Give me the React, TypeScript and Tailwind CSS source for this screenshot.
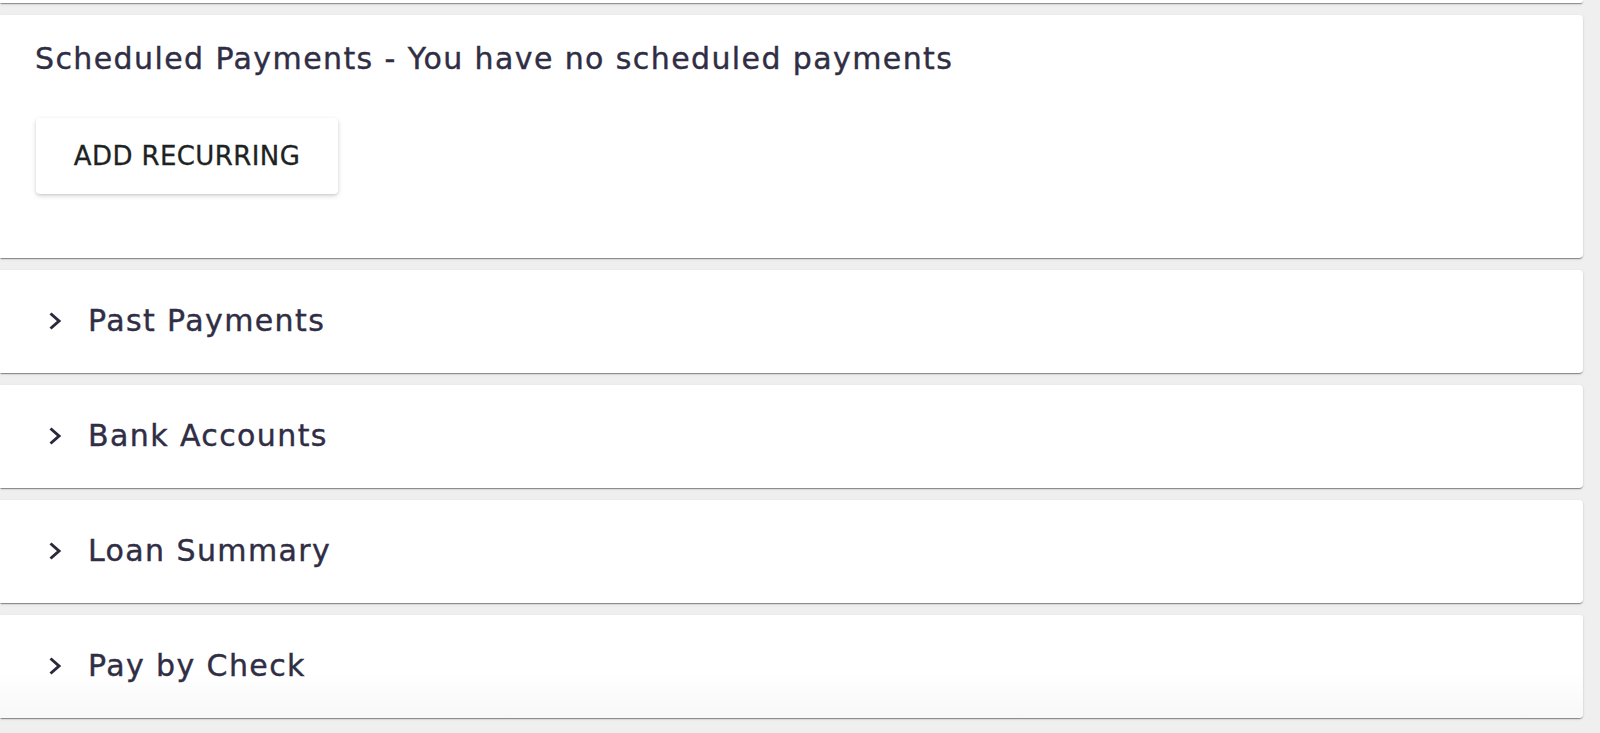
import React from "react";

const font = { fontFamily: '"DejaVu Sans", "Liberation Sans", sans-serif' };

const ChevronIcon = () => (
  <svg viewBox="0 0 18 22" className="w-[18px] h-[22px] shrink-0" fill="none">
    <polyline points="3.5,3.5 12,11 3.5,18.5" stroke="#2b2a3c" strokeWidth="3" strokeLinejoin="miter" />
  </svg>
);

const cardShadow =
  "shadow-[0_2px_1px_-1px_rgba(0,0,0,0.28),0_1px_1px_0_rgba(0,0,0,0.16),0_1px_3px_0_rgba(0,0,0,0.12)]";

const titleText =
  "text-[30px] leading-[36px] tracking-[1.4px] text-[#302e44] [-webkit-text-stroke:0.4px_#302e44]";

const sections = ["Past Payments", "Bank Accounts", "Loan Summary", "Pay by Check"];

export default function App() {
  return (
    <div className="min-h-screen bg-[#efefef] pr-[17px] overflow-hidden" style={font}>
      <div className="flex flex-col gap-[12px]">
        {/* tail of the card above */}
        <div className={`h-[3px] bg-white rounded-br-[4px] ${cardShadow}`} />

        {/* Scheduled payments */}
        <div className={`bg-white rounded-r-[4px] pl-[35px] pt-[26px] pb-[64px] ${cardShadow}`}>
          <h2 className={titleText}>Scheduled Payments - You have no scheduled payments</h2>
          <button className="mt-[41px] ml-[1px] w-[302px] h-[76px] flex items-center justify-center bg-white rounded-[4px] shadow-[0_2px_5px_rgba(0,0,0,0.16),0_1px_2px_rgba(0,0,0,0.08)] text-[26px] text-[#1d2222] tracking-[0.4px] [-webkit-text-stroke:0.3px_#1d2222]">
            ADD RECURRING
          </button>
        </div>

        {/* Collapsed sections */}
        {sections.map((title, i) => (
          <div
            key={title}
            className={`h-[103px] rounded-r-[4px] flex items-center pl-[47px] pb-[1px] gap-[23px] ${cardShadow} ${
              i === sections.length - 1
                ? "bg-[linear-gradient(to_bottom,#ffffff_55%,#f8f8f8)]"
                : "bg-white"
            }`}
          >
            <ChevronIcon />
            <span className={titleText}>{title}</span>
          </div>
        ))}
      </div>
    </div>
  );
}
